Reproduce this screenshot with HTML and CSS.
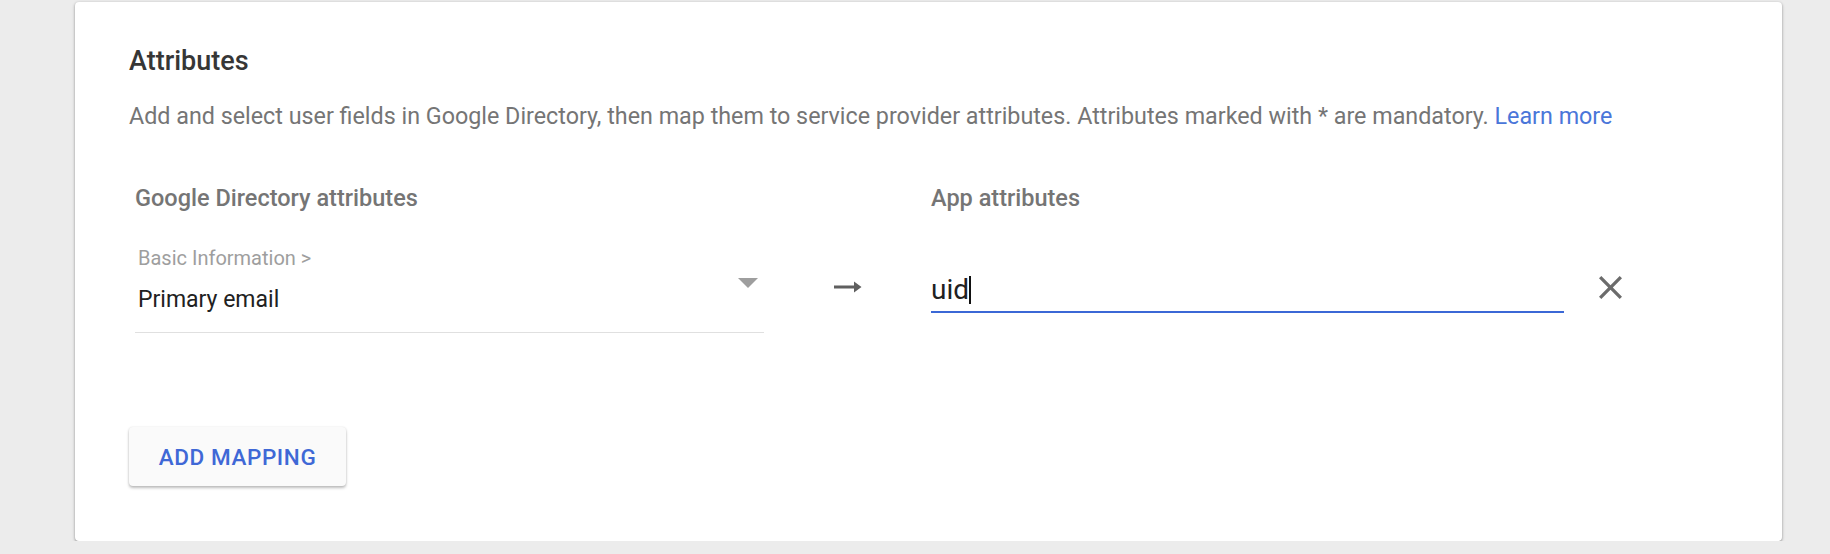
FILE: index.html
```html
<!DOCTYPE html>
<html lang="en">
<head>
<meta charset="utf-8">
<title>Attributes</title>
<link rel="stylesheet" href="styles.css">
</head>
<body>
  <section class="card">
    <h2 class="card-title">Attributes</h2>
    <p class="card-desc">Add and select user fields in Google Directory, then map them to service provider attributes. Attributes marked with * are mandatory. <a class="link" href="#">Learn more</a></p>

    <div class="mapping">
      <div class="col-head">Google Directory attributes</div>
      <div></div>
      <div class="col-head">App attributes</div>
      <div></div>

      <div class="select">
        <div class="select-text">
          <div class="select-label">Basic Information &gt;</div>
          <div class="select-value">Primary email</div>
        </div>
        <svg class="select-caret" width="20" height="10" viewBox="0 0 20 10"><path d="M0 0h20L10 10z" fill="#9e9e9e"/></svg>
      </div>

      <div class="arrow">
        <svg width="28" height="12" viewBox="0 0 28 12"><path d="M0 4.5h20V0.5L27.5 6 20 11.5V7.5H0z" fill="#5f5f5f"/></svg>
      </div>

      <div class="text-input">
        <span class="input-value">uid</span><span class="input-caret"></span>
      </div>

      <div class="remove">
        <svg width="23" height="23" viewBox="5 5 14 14"><path d="M19 6.41L17.59 5 12 10.59 6.41 5 5 6.41 10.59 12 5 17.59 6.41 19 12 13.41 17.59 19 19 17.59 13.41 12z" fill="#6b6b6b"/></svg>
      </div>
    </div>

    <button class="add-btn" type="button">ADD MAPPING</button>
  </section>
</body>
</html>
```

FILE: styles.css
```css
html, body {
  margin: 0;
  padding: 0;
}

body {
  background: #ececec;
  font-family: Roboto, "Liberation Sans", Arial, sans-serif;
  padding-top: 2px;
}

.card {
  margin-left: 75px;
  width: 1707px;
  height: 539px;
  box-sizing: border-box;
  padding: 44px 0 0 54px;
  background: #fff;
  border-radius: 4px;
  box-shadow: 0 1px 2px rgba(0, 0, 0, 0.28), 0 1px 3px 1px rgba(0, 0, 0, 0.12);
  display: flex;
  flex-direction: column;
  align-items: flex-start;
}

.card-title {
  margin: 0;
  font-size: 27px;
  line-height: 30px;
  font-weight: 500;
  color: #363636;
}

.card-desc {
  margin: 26px 0 0;
  font-size: 23.3px;
  line-height: 28px;
  color: #757575;
}

.link {
  color: #4a76d9;
  text-decoration: none;
}

.mapping {
  margin-top: 54px;
  margin-left: 6px;
  display: grid;
  grid-template-columns: 629px 167px 633px 92px;
  row-gap: 34px;
  align-items: start;
}

.col-head {
  font-size: 23.5px;
  line-height: 28px;
  font-weight: 500;
  color: #757575;
}

.select {
  display: flex;
  align-items: flex-start;
  border-bottom: 1px solid #e0e0e0;
  padding-left: 3px;
}

.select-text {
  flex: 1;
}

.select-label {
  font-size: 20px;
  line-height: 24px;
  color: #9e9e9e;
}

.select-value {
  margin-top: 15px;
  padding-bottom: 17px;
  font-size: 23px;
  line-height: 30px;
  color: #212121;
}

.select-caret {
  margin: 32px 6px 0 0;
  display: block;
}

.arrow {
  margin-top: 35px;
  display: flex;
  justify-content: center;
}

.arrow svg {
  display: block;
}

.text-input {
  margin-top: 28px;
  border-bottom: 2px solid #3b68d6;
  padding-bottom: 6px;
  display: flex;
  align-items: center;
  height: 31px;
}

.input-value {
  font-size: 28px;
  line-height: 31px;
  color: #212121;
}

.input-caret {
  width: 1.5px;
  height: 28px;
  background: #111;
  margin-left: 0;
}

.remove {
  margin-top: 30px;
  display: flex;
  justify-content: center;
}

.remove svg {
  display: block;
}

.add-btn {
  margin-top: 94px;
  width: 217px;
  height: 59px;
  border: none;
  border-radius: 4px;
  background: #fafafa;
  box-shadow: 0 2px 3px rgba(0, 0, 0, 0.26), 0 0 2px rgba(0, 0, 0, 0.1);
  font-family: Roboto, "Liberation Sans", Arial, sans-serif;
  font-size: 22.5px;
  font-weight: 500;
  letter-spacing: 0.6px;
  color: #3f68d6;
  padding: 0;
}
```
